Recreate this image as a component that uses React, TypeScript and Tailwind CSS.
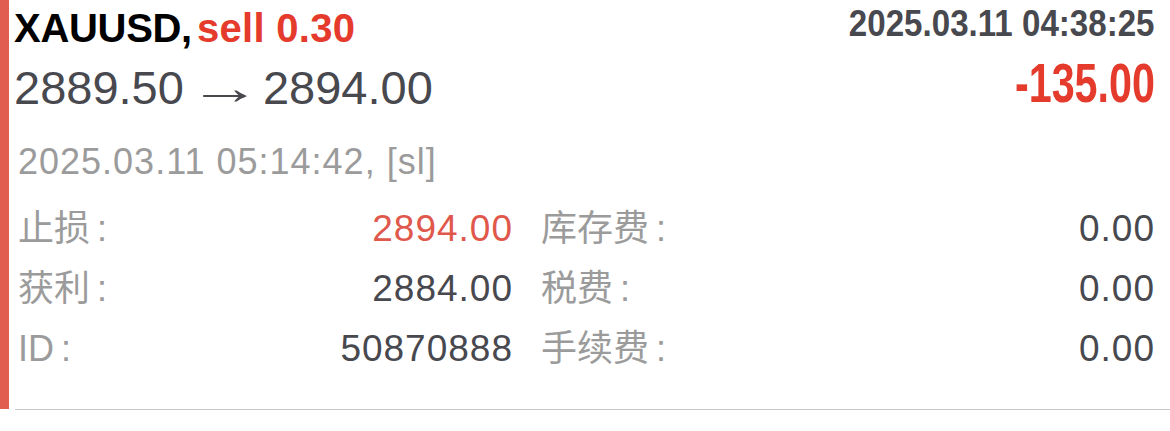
const rows = [
  { label: '止损', value: '2894.00', red: true, label2: '库存费', value2: '0.00' },
  { label: '获利', value: '2884.00', red: false, label2: '税费', value2: '0.00' },
  { label: 'ID', value: '50870888', red: false, label2: '手续费', value2: '0.00' },
];

function Cell({ label, value, red }: { label: string; value: string; red?: boolean }) {
  return (
    <div className="flex items-baseline justify-between">
      <span className="text-[36px] text-[#9b9b9b]">
        {label}
        <span className="ml-[7px]">:</span>
      </span>
      <span className={'text-[37px] tracking-[1px] ' + (red ? 'text-[#e0584b]' : 'text-[#48484f]')}>{value}</span>
    </div>
  );
}

export default function App() {
  return (
    <div className="w-[1170px] h-[431px] bg-white font-['Liberation_Sans','Noto_Sans_CJK_SC',sans-serif]">
      <div className="flex h-[409px]">
        <div className="w-[9px] bg-[#e05d50]" />

        <div className="flex-1 pl-[5px] pr-[15px]">
          {/* symbol, side, open time */}
          <div className="flex justify-between items-start pt-[5px]">
            <div className="mt-[3px] text-[40px] leading-none font-bold text-black tracking-[-0.3px]">
              XAUUSD,<span className="ml-[5px] text-[#e43b2c] tracking-[0.3px]">sell 0.30</span>
            </div>
            <div className="text-[37px] leading-none font-bold text-[#48484f] scale-x-[0.895] origin-right">
              2025.03.11 04:38:25
            </div>
          </div>

          {/* prices, profit */}
          <div className="flex justify-between items-start">
            <div className="mt-[16px] text-[47px] leading-none text-[#48484f]">
              2889.50
              <span className="inline-block ml-[16px] mr-[14px] w-[49px] text-center scale-x-[1.55]">→</span>
              2894.00
            </div>
            <div className="mt-[7px] text-[56px] leading-none font-bold text-[#e43b2c] scale-x-[0.737] origin-right">
              -135.00
            </div>
          </div>

          <div className="pl-[4px]">
            <div className="mt-[33px] text-[36px] leading-none tracking-[1px] text-[#9b9b9b]">
              2025.03.11 05:14:42, [sl]
            </div>

            <div className="mt-[19px] grid grid-cols-[495px_1fr] gap-x-[28px] leading-[60px]">
              {rows.map((r) => (
                <div key={r.label} className="contents">
                  <Cell label={r.label} value={r.value} red={r.red} />
                  <Cell label={r.label2} value={r.value2} />
                </div>
              ))}
            </div>
          </div>
        </div>
      </div>
      <div className="ml-[15px] h-px bg-[#c8c8cc]" />
    </div>
  );
}
